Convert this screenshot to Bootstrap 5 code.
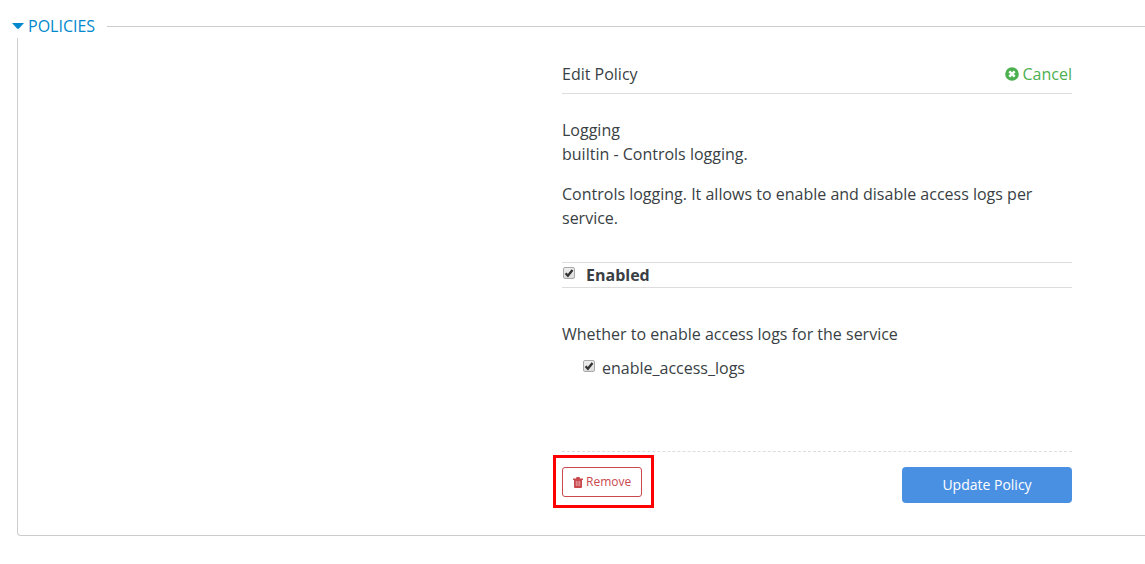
<!DOCTYPE html>
<html lang="en">
<head>
<meta charset="utf-8">
<meta name="viewport" content="width=device-width, initial-scale=1">
<title>Policies</title>
<link href="https://cdn.jsdelivr.net/npm/bootstrap@5.3.0/dist/css/bootstrap.min.css" rel="stylesheet">
<style>
  body { font-family: "Open Sans", "Noto Sans", sans-serif; font-size: 16px; line-height: 24px; color: #393f44; }
  .page { padding: 14px 0 28px 17px; }
  .policies { border: 1px solid #ccc; border-right: 0; border-radius: 4px 0 0 4px; padding: 0 73px 27px 24px; }
  .policies > legend { font-size: 16px; line-height: 24px; margin: 0 0 0 -30px; padding: 0 12px 0 0; }
  .toggle { color: #0088ce; gap: 4px; }
  .editor { width: 100%; max-width: 510px; padding-top: 24px; }
  .ruled { border-bottom: 1px solid #ddd; }
  .heading { padding-bottom: 7px; }
  .cancel { color: #4caf50; gap: 4px; }
  .about { padding: 24px 0 32px; }
  .enabled-row { border-top: 1px solid #ddd; gap: 11px; padding-left: 1px; }
  .tick { appearance: none; width: 12px; height: 12px; margin: 0; border: 1px solid #a9a9a9; border-radius: 2px;
    background: url("data:image/svg+xml,%3Csvg xmlns='http://www.w3.org/2000/svg' viewBox='0 0 10 10'%3E%3Cpath d='M1.6 5.3 3.9 7.8 8.5 2' fill='none' stroke='%23333' stroke-width='2.3'/%3E%3C/svg%3E") center / 10px 10px no-repeat, linear-gradient(#eee, #ddd); }
  .tick:not(:checked) { background: #eee; }
  .options { padding: 34px 0 71px; }
  .option { padding: 10px 0 0 21px; gap: 7px; }
  .actions { border-top: 1px dashed #ddd; padding-top: 3px; }
  .highlight { border: 3px solid #f00; padding: 9px 9px 8px 6px; margin-left: -9px; }
  .remove { --bs-btn-color: #c9494e; --bs-btn-border-color: #c9494e; --bs-btn-bg: #fff; --bs-btn-hover-color: #fff; --bs-btn-hover-bg: #c9494e;
    --bs-btn-padding-x: 10px; --bs-btn-padding-y: 4px; --bs-btn-font-size: 12px; --bs-btn-line-height: 20px; --bs-btn-border-radius: 3px; gap: 3px; }
  .update { --bs-btn-color: #fff; --bs-btn-bg: #4a90e2; --bs-btn-hover-color: #fff; --bs-btn-hover-bg: #357bd0;
    --bs-btn-font-size: 14px; --bs-btn-line-height: 20px; --bs-btn-padding-y: 7px; --bs-btn-border-radius: 4px; width: 170px; margin-top: 12px; }
</style>
</head>
<body>
<main class="page">
  <form>
    <fieldset class="policies">
      <legend class="float-none w-auto bg-white">
        <a href="#policies" class="toggle d-flex align-items-center text-decoration-none">
          <svg width="12" height="8" viewBox="0 0 12 8" aria-hidden="true"><path d="M0 1h12L7 6.500q-1 .8-2 0z" fill="currentColor"/></svg>
          POLICIES
        </a>
      </legend>
      <div id="policies" class="d-flex justify-content-end">
        <section class="editor">
          <header class="heading ruled d-flex justify-content-between">
            <span>Edit Policy</span>
            <a href="#cancel" class="cancel d-flex align-items-center text-decoration-none">
              <svg width="14" height="14" viewBox="0 0 14 14" aria-hidden="true"><circle cx="7" cy="7" r="6.800" fill="currentColor"/><path d="m4.300 4.300 5.400 5.400m0-5.400-5.400 5.400" stroke="#fff" stroke-width="2.500"/></svg>
              Cancel
            </a>
          </header>
          <div class="about">
            <div>Logging</div>
            <p class="mb-3">builtin - Controls logging.</p>
            <p class="mb-0">Controls logging. It allows to enable and disable access logs per service.</p>
          </div>
          <div class="enabled-row ruled d-flex align-items-start">
            <input type="checkbox" class="tick mt-1" id="enabled" checked>
            <label for="enabled" class="fw-bold">Enabled</label>
          </div>
          <div class="options">
            <div>Whether to enable access logs for the service</div>
            <div class="option d-flex align-items-start">
              <input type="checkbox" class="tick mt-1" id="access" checked>
              <label for="access">enable_access_logs</label>
            </div>
          </div>
          <footer class="actions d-flex justify-content-between align-items-start">
            <div class="highlight">
              <button type="button" class="remove btn d-flex align-items-center">
                <svg width="10" height="11" viewBox="0 0 10 11" aria-hidden="true"><path d="M0 1.500h3L3.500 0h3L7 1.500h3V3H9v7q0 1-1 1H2q-1 0-1-1V3H0z" fill="currentColor"/><path d="M3.300 4v5M5 4v5M6.700 4v5" stroke="#fff" stroke-width=".6" stroke-opacity=".8"/></svg>
                Remove
              </button>
            </div>
            <button type="submit" class="update btn">Update Policy</button>
          </footer>
        </section>
      </div>
    </fieldset>
  </form>
</main>
<script src="https://cdn.jsdelivr.net/npm/bootstrap@5.3.0/dist/js/bootstrap.bundle.min.js"></script>
</body>
</html>
